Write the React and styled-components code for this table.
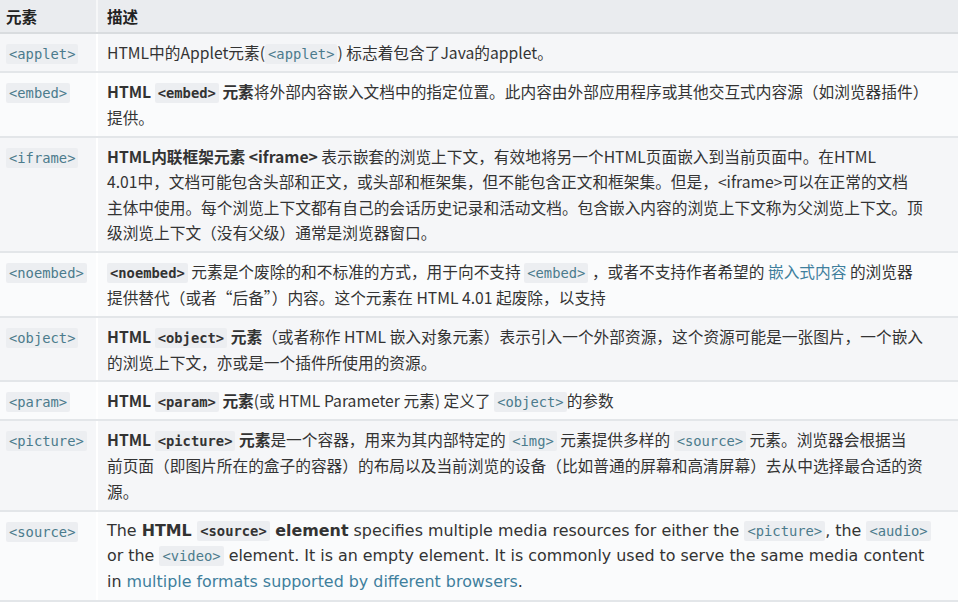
import React from "react";
import styled, { createGlobalStyle } from "styled-components";

const GlobalStyle = createGlobalStyle`
  html, body {
    margin: 0;
    padding: 0;
    background: #fff;
  }
  body {
    font-family: "Noto Sans CJK SC", "Noto Sans", sans-serif;
    color: #333;
  }
`;

const Table = styled.table`
  width: 958px;
  border-collapse: collapse;
  table-layout: fixed;
`;

const HeadCell = styled.th`
  text-align: left;
  font-weight: bold;
  font-size: 15.5px;
  line-height: 20px;
  padding: 6px 6px 6px ${(p) => (p.$first ? "6px" : "9px")};
  background: #eaecef;
  border-bottom: 2px solid #d9dcdf;
  border-left: ${(p) => (p.$first ? "none" : "2px solid #f6f7f8")};
  color: #222;
  width: ${(p) => (p.$first ? "97px" : "auto")};
  box-sizing: border-box;
`;

const Row = styled.tr`
  background: ${(p) => (p.$odd ? "#f5f6f8" : "#fafbfc")};
`;

const NameCell = styled.td`
  vertical-align: top;
  padding: 6px 4px 5.4px 6px;
  border-bottom: 2px solid #e3e6e9;
  line-height: 25.6px;
`;

const DescCell = styled.td`
  vertical-align: top;
  padding: 6px 8px 5.4px 9px;
  border-bottom: 2px solid #e3e6e9;
  border-left: 2px solid #fff;
  font-size: ${(p) => (p.$en ? "15.9px" : "15.7px")};
  font-family: ${(p) =>
    p.$en
      ? '"DejaVu Sans", "Noto Sans CJK SC", sans-serif'
      : '"Noto Sans CJK SC", "Noto Sans", sans-serif'};
  line-height: 25.6px;
  color: #333;
`;

const Code = styled.code`
  font-family: "DejaVu Sans Mono", "Liberation Mono", monospace;
  font-size: 13.8px;
  line-height: 1;
  font-weight: ${(p) => (p.$bold ? "bold" : "normal")};
  color: ${(p) => (p.$bold ? "#333" : "#4b7b8c")};
  background: #eceef1;
  padding: 2px 3px;
  border-radius: 2px;
`;

const Strong = styled.b`
  font-weight: bold;
  color: #333;
`;

const Link = styled.a`
  color: #3f7f9d;
  text-decoration: none;
`;

const rows = [
  {
    name: "<applet>",
    desc: (
      <>
        HTML中的Applet元素(<Code>&lt;applet&gt;</Code>) 标志着包含了Java的applet。
      </>
    ),
  },
  {
    name: "<embed>",
    desc: (
      <>
        <Strong>
          HTML <Code $bold>&lt;embed&gt;</Code> 元素
        </Strong>
        将外部内容嵌入文档中的指定位置。此内容由外部应用程序或其他交互式内容源（如浏览器插件）
        <br />
        提供。
      </>
    ),
  },
  {
    name: "<iframe>",
    desc: (
      <>
        <Strong>HTML内联框架元素 &lt;iframe&gt;</Strong>{" "}
        表示嵌套的浏览上下文，有效地将另一个HTML页面嵌入到当前页面中。在HTML
        <br />
        4.01中，文档可能包含头部和正文，或头部和框架集，但不能包含正文和框架集。但是，&lt;iframe&gt;可以在正常的文档
        <br />
        主体中使用。每个浏览上下文都有自己的会话历史记录和活动文档。包含嵌入内容的浏览上下文称为父浏览上下文。顶
        <br />
        级浏览上下文（没有父级）通常是浏览器窗口。
      </>
    ),
  },
  {
    name: "<noembed>",
    desc: (
      <>
        <Code $bold>&lt;noembed&gt;</Code> 元素是个废除的和不标准的方式，用于向不支持{" "}
        <Code>&lt;embed&gt;</Code> ，或者不支持作者希望的{" "}
        <Link href="#">嵌入式内容</Link> 的浏览器
        <br />
        提供替代（或者“后备”）内容。这个元素在 HTML 4.01 起废除，以支持
      </>
    ),
  },
  {
    name: "<object>",
    desc: (
      <>
        <Strong>
          HTML <Code $bold>&lt;object&gt;</Code> 元素
        </Strong>
        （或者称作 HTML
        嵌入对象元素）表示引入一个外部资源，这个资源可能是一张图片，一个嵌入
        <br />
        的浏览上下文，亦或是一个插件所使用的资源。
      </>
    ),
  },
  {
    name: "<param>",
    desc: (
      <>
        <Strong>
          HTML <Code $bold>&lt;param&gt;</Code> 元素
        </Strong>
        (或 HTML Parameter 元素) 定义了 <Code>&lt;object&gt;</Code>的参数
      </>
    ),
  },
  {
    name: "<picture>",
    desc: (
      <>
        <Strong>
          HTML <Code $bold>&lt;picture&gt;</Code> 元素
        </Strong>
        是一个容器，用来为其内部特定的 <Code>&lt;img&gt;</Code> 元素提供多样的{" "}
        <Code>&lt;source&gt;</Code> 元素。浏览器会根据当
        <br />
        前页面（即图片所在的盒子的容器）的布局以及当前浏览的设备（比如普通的屏幕和高清屏幕）去从中选择最合适的资
        <br />
        源。
      </>
    ),
  },
  {
    name: "<source>",
    en: true,
    desc: (
      <>
        The{" "}
        <Strong>
          HTML <Code $bold>&lt;source&gt;</Code> element
        </Strong>{" "}
        specifies multiple media resources for either the{" "}
        <Code>&lt;picture&gt;</Code>, the <Code>&lt;audio&gt;</Code>
        <br />
        or the <Code>&lt;video&gt;</Code> element. It is an empty element. It
        is commonly used to serve the same media content
        <br />
        in{" "}
        <Link href="#">multiple formats supported by different browsers</Link>.
      </>
    ),
  },
];

export default function App() {
  return (
    <>
      <GlobalStyle />
      <Table>
        <thead>
          <tr>
            <HeadCell $first>元素</HeadCell>
            <HeadCell>描述</HeadCell>
          </tr>
        </thead>
        <tbody>
          {rows.map((r, i) => (
            <Row key={r.name} $odd={i % 2 === 0}>
              <NameCell>
                <Code>{r.name}</Code>
              </NameCell>
              <DescCell $en={r.en}>{r.desc}</DescCell>
            </Row>
          ))}
        </tbody>
      </Table>
    </>
  );
}
